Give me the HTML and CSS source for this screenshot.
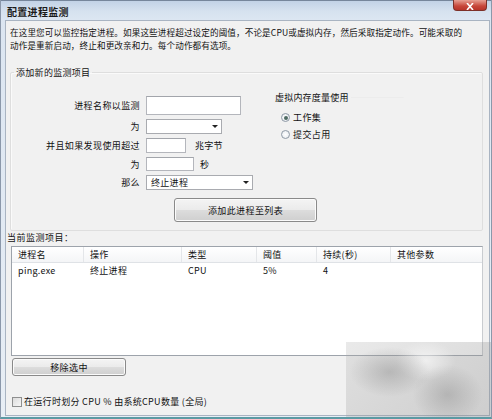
FILE: index.html
```html
<!DOCTYPE html>
<html lang="zh-CN">
<head>
<meta charset="utf-8">
<title>配置进程监测</title>
<link rel="stylesheet" href="styles.css">
</head>
<body>
<div class="window">
  <div class="titlebar">
    <span class="title">配置进程监测</span>
    <div class="close"><svg width="10" height="7" viewBox="0 0 10 7"><path d="M2 0 L8 7 M8 0 L2 7" stroke="#fff" stroke-width="1.6" fill="none"/></svg></div>
  </div>
  <div class="client">
    <div class="desc">
      <div>在这里您可以监控指定进程。如果这些进程超过设定的阈值，不论是CPU或虚拟内存，然后采取指定动作。可能采取的</div>
      <div>动作是重新启动，终止和更改亲和力。每个动作都有选项。</div>
    </div>

    <fieldset class="group">
      <legend>添加新的监测项目</legend>
      <div class="group-body">
        <div class="form">
          <span class="lbl r1">进程名称以监测</span>
          <span class="ctl r1"><span class="input w95"></span></span>

          <span class="lbl r2">为</span>
          <span class="ctl r2"><span class="select w76"><span class="arrow"></span></span></span>

          <span class="lbl r3">并且如果发现使用超过</span>
          <span class="ctl r3"><span class="input w40 h15"></span><span class="unit">兆字节</span></span>

          <span class="lbl r4">为</span>
          <span class="ctl r4"><span class="input w48 h14"></span><span class="unit u2">秒</span></span>

          <span class="lbl r5">那么</span>
          <span class="ctl r5"><span class="select w107 h14"><span class="sel-text">终止进程</span><span class="arrow"></span></span></span>
        </div>
        <fieldset class="vm">
          <legend>虚拟内存度量使用</legend>
          <div class="radio-row"><span class="radio on"></span>工作集</div>
          <div class="radio-row"><span class="radio"></span>提交占用</div>
        </fieldset>
      </div>
      <button class="btn add">添加此进程至列表</button>
    </fieldset>

    <div class="list-label">当前监测项目：</div>
    <div class="list">
      <div class="lrow head">
        <span class="c1">进程名</span><span class="c2">操作</span><span class="c3">类型</span><span class="c4">阈值</span><span class="c5">持续(秒)</span><span class="c6">其他参数</span>
      </div>
      <div class="lrow">
        <span class="c1">ping.exe</span><span class="c2">终止进程</span><span class="c3">CPU</span><span class="c4">5%</span><span class="c5">4</span><span class="c6"></span>
      </div>
    </div>
    <button class="btn remove">移除选中</button>
    <div class="check"><span class="box"></span>在运行时划分 CPU % 由系统CPU数量 (全局)</div>
  </div>
  <div class="watermark"></div>
</div>
</body>
</html>
```

FILE: styles.css
```css
* { box-sizing: border-box; }
body {
  margin: 0;
  background: #ffffff;
  font-family: "Noto Sans CJK SC", "Noto Sans", sans-serif;
  font-size: 9px;
  color: #111;
}
.window {
  position: relative;
  width: 492px;
  height: 419px;
  display: flex;
  flex-direction: column;
  background: linear-gradient(#dbe5f1, #e8eef5);
  border-left: 1px solid #8b98aa;
  border-right: 1px solid #8b98aa;
  border-bottom: 2px solid #5b9aa3;
  overflow: hidden;
}
.titlebar {
  position: relative;
  height: 20px;
  flex: none;
  display: flex;
  align-items: center;
  padding-left: 6px;
  border-top: 1px solid #76869b;
  background: linear-gradient(#c2d2e6, #d6e2ef 55%, #dce6f2);
}
.title {
  font-weight: bold;
  font-size: 10px;
  letter-spacing: 0.3px;
  margin-top: 2px;
  color: #1a1a1a;
}
.close {
  position: absolute;
  right: 4px;
  top: -1px;
  width: 34px;
  height: 11px;
  background: linear-gradient(#e7a093, #c7473a 60%, #b8352a);
  border: 1px solid #7d3028;
  border-top: none;
  border-radius: 0 0 4px 4px;
  display: flex;
  align-items: flex-end;
  justify-content: center;
  overflow: hidden;
}
.client {
  flex: 1;
  margin: 0 1px 1px 4px;
  background: #f1f1f1;
  border: 1px solid #a9b4c2;
  display: flex;
  flex-direction: column;
  align-items: flex-start;
}
.desc {
  margin: 5px 0 0 4px;
  font-size: 8.6px;
  line-height: 12.5px;
  white-space: nowrap;
  letter-spacing: 0.1px;
}
.group {
  margin: 16px 0 0 4px;
  width: 473px;
  padding: 0 0 8px 0;
  border: 1px solid #dedede;
  border-radius: 2px;
  box-shadow: inset 1px 1px 0 #fafafa;
}
.group > legend {
  margin-left: 3px;
  padding: 0 2px;
  line-height: 11px;
  letter-spacing: 0.3px;
}
.group-body {
  display: flex;
  padding-top: 18px;
}
.form {
  display: grid;
  grid-template-columns: 129px auto;
  grid-template-rows: 19px 15px 15px 14px 14px;
  row-gap: 4px;
  column-gap: 6px;
  align-items: center;
}
.lbl {
  text-align: right;
  letter-spacing: 0.4px;
  white-space: nowrap;
}
.ctl {
  display: flex;
  align-items: center;
}
.input {
  display: block;
  height: 19px;
  background: #fff;
  border: 1px solid #b4b6bc;
  border-top-color: #a2a5ab;
}
.w95 { width: 95px; }
.w40 { width: 40px; }
.w48 { width: 48px; }
.h15 { height: 15px; }
.h14 { height: 14px; }
.select {
  position: relative;
  display: flex;
  align-items: center;
  height: 15px;
  background: #fff;
  border: 1px solid #a9abb0;
  padding-left: 4px;
}
.w76 { width: 76px; }
.w107 { width: 107px; }
.sel-text { letter-spacing: 0.3px; }
.arrow {
  margin-left: auto;
  margin-right: 3px;
  width: 0;
  height: 0;
  border-left: 3px solid transparent;
  border-right: 3px solid transparent;
  border-top: 3px solid #222;
}
.unit {
  margin-left: 9px;
  letter-spacing: 0.3px;
}
.u2 { margin-left: 6px; }
.vm {
  margin: -4px 0 0 21px;
  padding: 6px 0 0 0;
  border: 1px solid transparent;
  border-top-color: #ececec;
  width: 130px;
  height: 60px;
}
.vm > legend {
  padding: 0 2px 0 0;
  margin-left: 0;
  line-height: 11px;
  letter-spacing: 0.2px;
}
.radio-row {
  display: flex;
  align-items: center;
  height: 17px;
  padding-left: 6px;
  letter-spacing: 0.4px;
}
.radio {
  width: 9px;
  height: 9px;
  border-radius: 50%;
  border: 1px solid #8f9aa6;
  background: radial-gradient(#fff, #e3e7ec);
  margin-right: 3px;
  position: relative;
}
.radio.on::after {
  content: "";
  position: absolute;
  left: 1.5px;
  top: 1.5px;
  width: 4px;
  height: 4px;
  border-radius: 50%;
  background: #4d6a62;
}
.btn {
  font-family: inherit;
  font-size: 9px;
  color: #111;
  letter-spacing: 0.4px;
  border: 1px solid #8a8a8a;
  border-radius: 3px;
  background: linear-gradient(#f4f4f4, #ebebeb 48%, #dcdcdc 52%, #cfcfcf);
  box-shadow: inset 0 0 0 1px #fbfbfb;
  padding: 0;
  display: flex;
  align-items: center;
  justify-content: center;
}
.add {
  margin: 9px 0 0 163px;
  width: 143px;
  height: 24px;
}
.list-label {
  margin: 1px 0 0 1px;
  line-height: 11px;
  letter-spacing: 0.5px;
}
.list {
  margin: 3px 0 0 5px;
  width: 472px;
  height: 110px;
  background: #fff;
  border: 1px solid #9da3ab;
  border-right-color: #c9ccd0;
}
.lrow {
  display: flex;
  height: 14px;
  align-items: center;
  white-space: nowrap;
  letter-spacing: 0.3px;
}
.lrow.head {
  height: 16px;
  background: linear-gradient(#ffffff, #f4f5f7);
  border-bottom: 1px solid #dfe2e6;
}
.lrow > span { padding-left: 6px; height: 100%; display: flex; align-items: center; }
.head > span { border-right: 1px solid #e4e6e9; }
.c1 { width: 72px; }
.c2 { width: 98px; }
.c3 { width: 75px; }
.c4 { width: 60px; }
.c5 { width: 74px; }
.c6 { flex: 1; border-right: none !important; }
.remove {
  margin: 2px 0 0 6px;
  width: 114px;
  height: 18px;
}
.check {
  margin: 20px 0 0 6px;
  display: flex;
  align-items: center;
  line-height: 11px;
  letter-spacing: 0.3px;
}
.box {
  width: 10px;
  height: 10px;
  border: 1px solid #8e8f8f;
  background: linear-gradient(135deg, #dcdcdc, #f6f6f6);
  margin-right: 2px;
}
.watermark {
  position: absolute;
  right: 0;
  bottom: 0;
  width: 145px;
  height: 75px;
  background:
    radial-gradient(ellipse 40px 25px at 30% 40%, rgba(120,120,120,0.35), transparent),
    radial-gradient(ellipse 35px 30px at 70% 70%, rgba(110,110,110,0.3), transparent),
    radial-gradient(ellipse 30px 20px at 55% 25%, rgba(255,255,255,0.6), transparent),
    linear-gradient(135deg, rgba(170,170,170,0.25), rgba(140,140,140,0.35));
  pointer-events: none;
}
```
